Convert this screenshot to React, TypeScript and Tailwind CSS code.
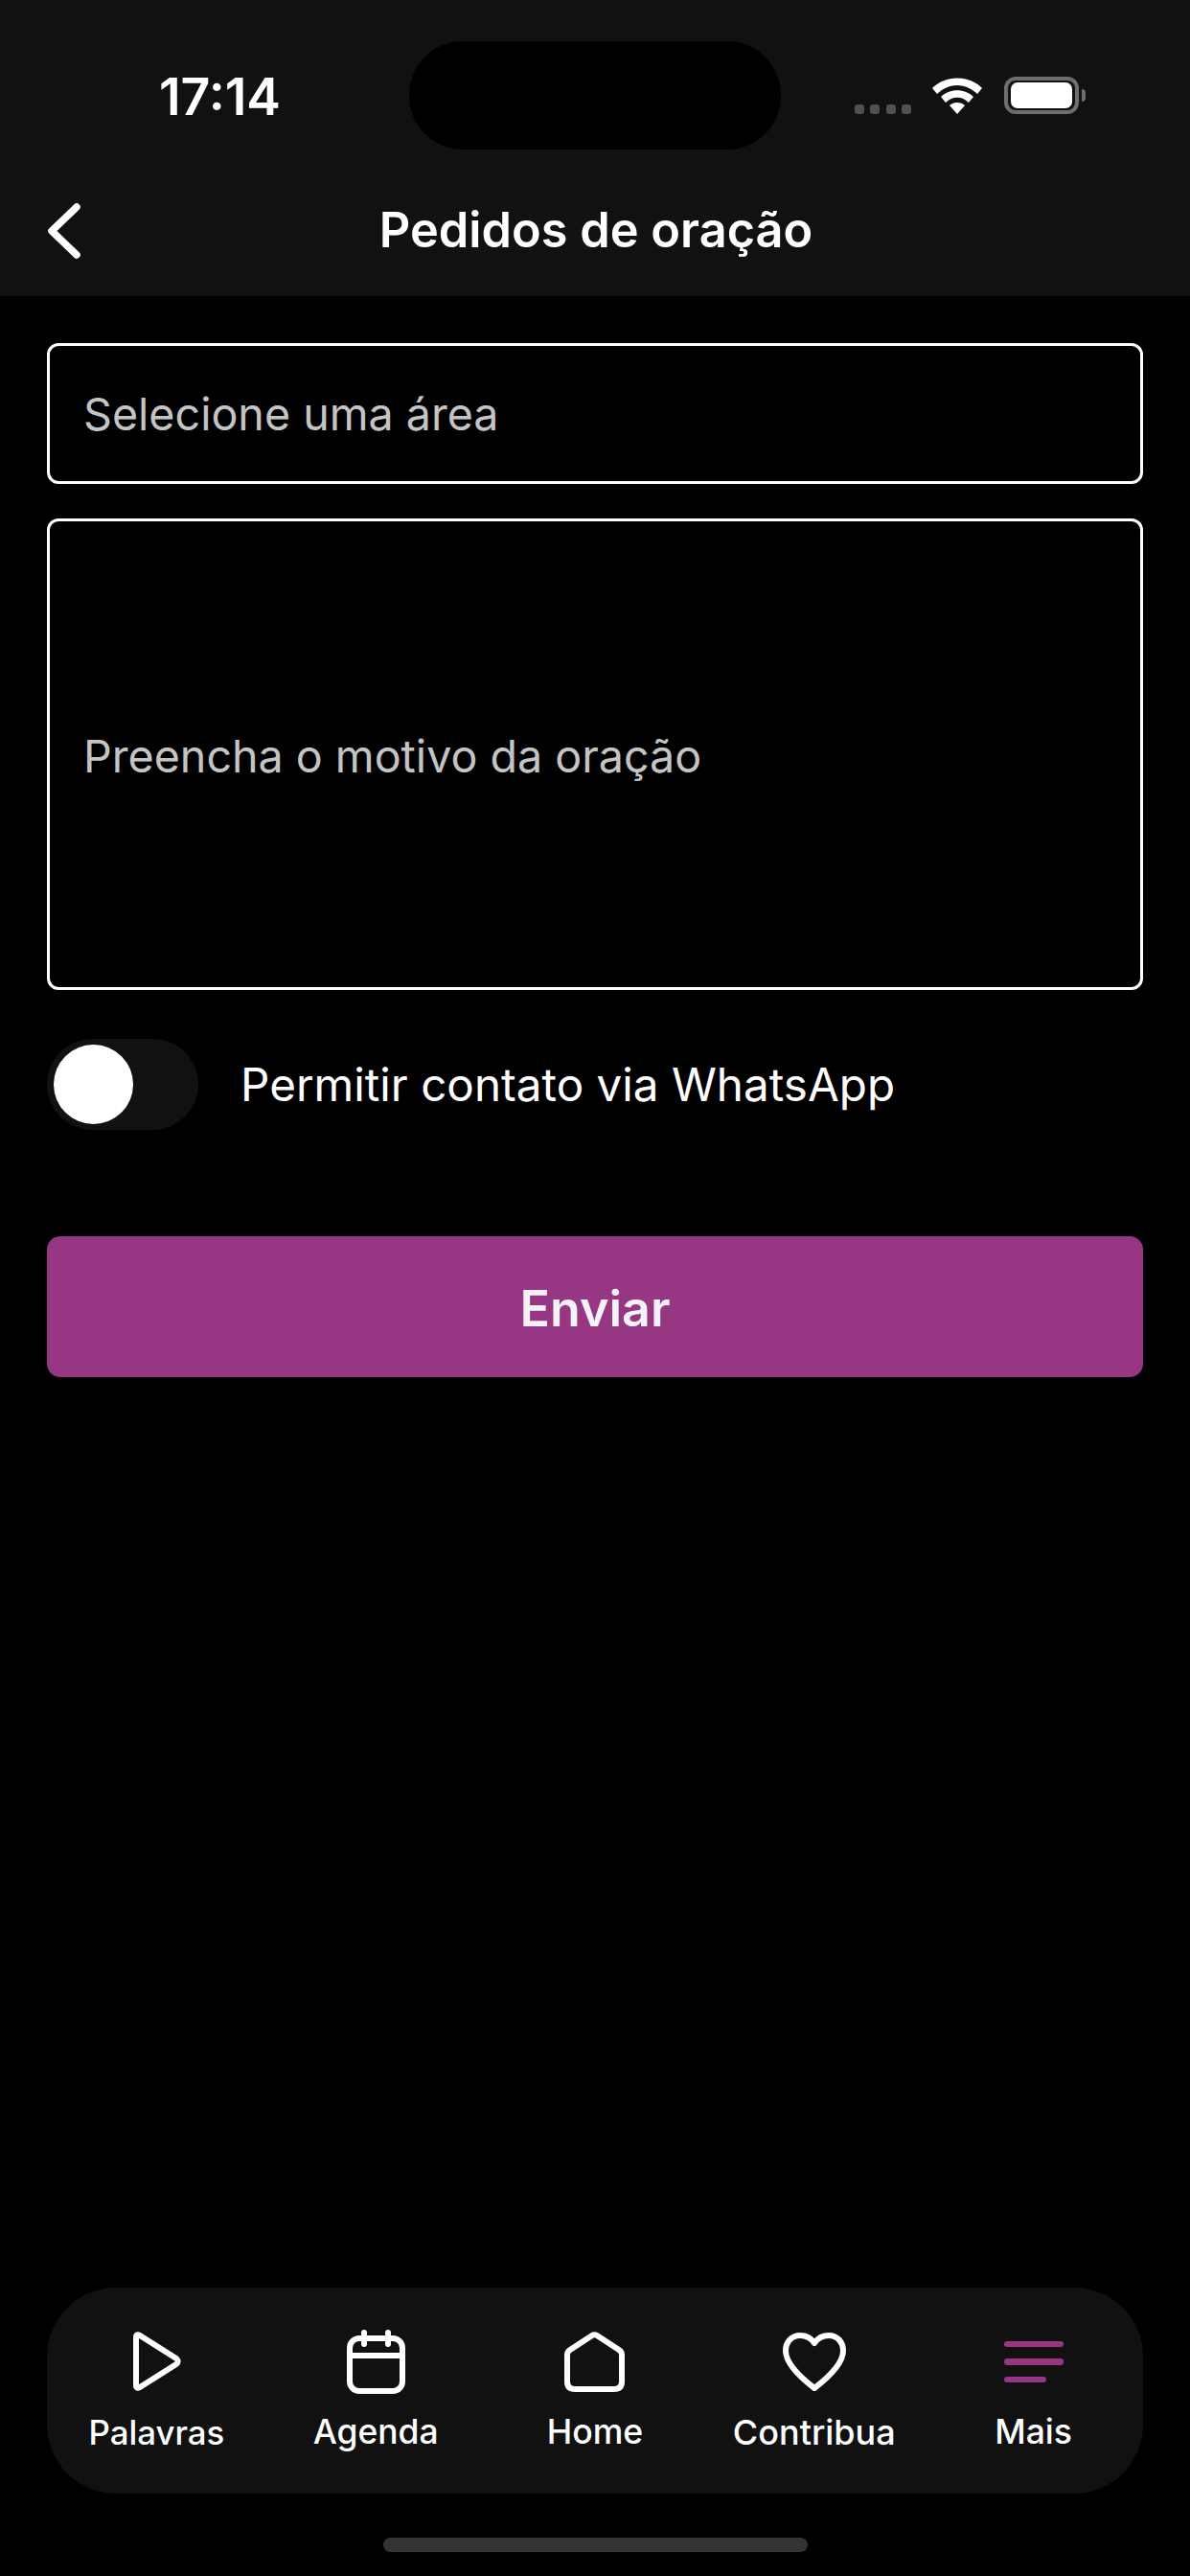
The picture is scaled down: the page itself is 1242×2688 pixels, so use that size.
const font = { fontFamily: '"Inter", "Liberation Sans", sans-serif' };

function NavItem({ label, children, size }: { label: string; children: React.ReactNode; size: string }) {
  return (
    <div className="flex-1 flex flex-col items-center">
      <div className="h-[72px] w-[72px] flex items-center justify-center">{children}</div>
      <span className={`mt-[17px] ${size} leading-[42px] font-medium text-white whitespace-nowrap`}>{label}</span>
    </div>
  );
}

export default function App() {
  return (
    <div className="w-[1242px] h-[2688px] bg-black flex flex-col relative overflow-hidden" style={font}>
      <header className="h-[309px] bg-[#111111] flex flex-col shrink-0">
        <div className="h-[200px] relative flex justify-between">
          <span className="ml-[166px] mt-[71px] text-[53.5px] leading-[60px] font-semibold text-white">17:14</span>
          <div className="absolute left-[427px] top-[43px] w-[388px] h-[113px] rounded-[56px] bg-black" />
          <div className="mr-[109px] mt-[80px] flex items-start">
            <div className="flex gap-[6.5px] mt-[29px]">
              <i className="block w-[10px] h-[10px] rounded-[3px] bg-[#505050]" />
              <i className="block w-[10px] h-[10px] rounded-[3px] bg-[#505050]" />
              <i className="block w-[10px] h-[10px] rounded-[3px] bg-[#505050]" />
              <i className="block w-[10px] h-[10px] rounded-[3px] bg-[#505050]" />
            </div>
            <svg className="ml-[22px] mt-[1px]" width="52" height="38" viewBox="0 0 52 38" fill="#fff">
              <path d="M0 11 C14 -3 38 -3 52 11 L47 17 C34 5 18 5 5 17 Z" />
              <path d="M9 20 C18 11 34 11 43 20 L38 26 C31 19 21 19 14 26 Z" />
              <path d="M18 29 C22 25 30 25 34 29 L26 38 Z" />
            </svg>
            <div className="ml-[23px] flex items-center">
              <div className="w-[78px] h-[39px] rounded-[12px] border-[4px] border-[#6e6e6e] px-[3px] py-[2px]">
                <div className="w-full h-full rounded-[7px] bg-white" />
              </div>
              <div className="w-[4px] h-[13px] rounded-r-[4px] bg-[#6e6e6e] ml-[3px]" />
            </div>
          </div>
        </div>
        <div className="h-[80px] relative flex items-center justify-center">
          <svg className="absolute left-[50px] top-[12px]" width="34" height="58" viewBox="0 0 34 58" fill="none" stroke="#fff" strokeWidth="7.5" strokeLinecap="round" strokeLinejoin="round">
            <path d="M30 4 L4 29 L30 54" />
          </svg>
          <h1 className="ml-[2px] text-[50.5px] leading-[60px] font-semibold text-white">Pedidos de oração</h1>
        </div>
      </header>

      <main className="px-[49px] pt-[49px] flex flex-col flex-1">
        <div className="h-[147px] border-[3px] border-white rounded-[12px] flex items-center pl-[35px] pt-[3px] text-[46.6px] text-[#c4c4c4]">Selecione uma área</div>
        <div className="mt-[36px] h-[492px] border-[3px] border-white rounded-[12px] flex items-center pl-[35px] pt-[5px] text-[46.6px] text-[#c4c4c4]">Preencha o motivo da oração</div>
        <div className="mt-[51px] flex items-center h-[95px]">
          <div className="w-[158px] h-[95px] rounded-full bg-[#111111] pl-[7px] flex items-center">
            <div className="w-[83px] h-[83px] rounded-full bg-white" />
          </div>
          <span className="ml-[44px] text-[47.6px] text-white">Permitir contato via WhatsApp</span>
        </div>
        <button className="mt-[111px] h-[147px] pt-[4px] rounded-[14px] bg-[#973683] text-[52px] font-semibold text-[#f2f2f7]">Enviar</button>
      </main>

      <nav className="mx-[49px] h-[215px] rounded-[72px] bg-[#111111] flex items-start pt-[41px] shrink-0">
        <NavItem label="Palavras" size="text-[34.8px]">
          <svg className="ml-[1px]" width="50" height="62" viewBox="0 0 50 62" fill="none" stroke="#fff" strokeWidth="6" strokeLinejoin="round"><path d="M3 6 Q3 2 7 4 L45 28 Q48 31 45 34 L7 58 Q3 60 3 56 Z" /></svg>
        </NavItem>
        <NavItem label="Agenda" size="text-[35.4px]">
          <svg width="61" height="67" viewBox="0 0 61 67" fill="none" stroke="#fff" strokeWidth="6" strokeLinecap="round"><rect x="3" y="9" width="55" height="55" rx="10" /><path d="M3 27 H58" strokeLinecap="butt" /><path d="M18 3 V15 M43 3 V15" /></svg>
        </NavItem>
        <NavItem label="Home" size="text-[35.6px]">
          <svg width="63" height="63" viewBox="0 0 63 63" fill="none" stroke="#fff" strokeWidth="6" strokeLinejoin="round"><path d="M3 24 Q3 21 6 19 L29 4 Q31.5 2.5 34 4 L57 19 Q60 21 60 24 V52 Q60 60 52 60 H11 Q3 60 3 52 Z" /></svg>
        </NavItem>
        <NavItem label="Contribua" size="text-[36px]">
          <svg width="66" height="61" viewBox="0 0 66 61" fill="none" stroke="#fff" strokeWidth="6" strokeLinejoin="round"><path d="M33 11 C29 5 23 3 18 3 C9 3 3 10 3 19 C3 33 20 48 33 58 C46 48 63 33 63 19 C63 10 57 3 48 3 C43 3 37 5 33 11 Z" /></svg>
        </NavItem>
        <NavItem label="Mais" size="text-[35.6px]">
          <svg width="62" height="43" viewBox="0 0 62 43" fill="#973683"><rect x="0" y="0" width="62" height="6" rx="3" /><rect x="0" y="18" width="62" height="7" rx="3" /><rect x="0" y="37" width="44" height="6" rx="3" /></svg>
        </NavItem>
      </nav>
      <div className="h-[86px] flex items-start justify-center pt-[46px] shrink-0">
        <div className="w-[443px] h-[15px] rounded-full bg-[#333333]" />
      </div>
    </div>
  );
}
